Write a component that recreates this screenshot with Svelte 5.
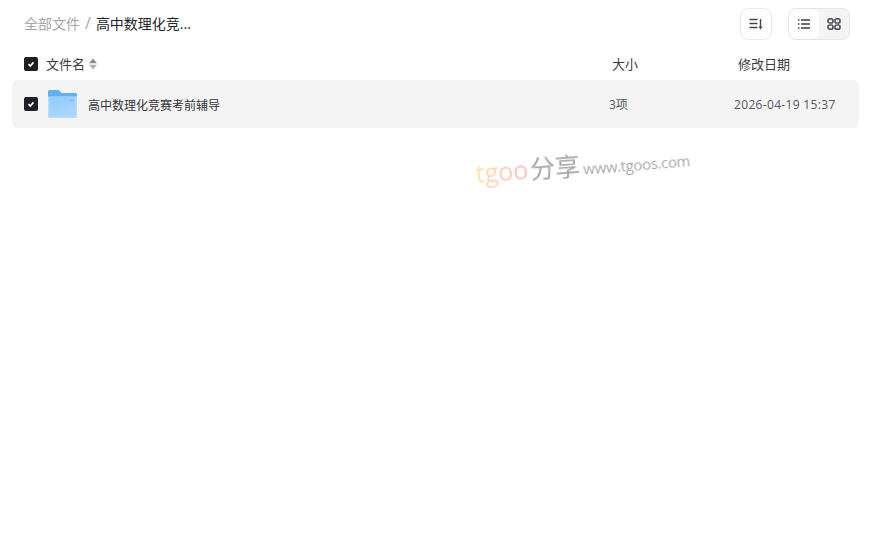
<script>
	const row = { name: '高中数理化竞赛考前辅导', size: '3项', date: '2026-04-19 15:37' }
</script>

<div class="page">
	<header class="top">
		<nav class="crumbs">
			<span class="root">全部文件</span>
			<span class="sep">/</span>
			<span class="current">高中数理化竞...</span>
		</nav>
		<div class="tools">
			<button class="sort-btn" aria-label="排序">
				<svg width="16" height="16" viewBox="0 0 16 16" fill="none" stroke="#45454f" stroke-width="1.4">
					<path d="M1.500 3.500h8M1.500 7.500h8M1.500 11.500h8" />
					<path d="M12.500 3v9" />
					<path d="M10.500 10.500h4l-2 3z" fill="#45454f" stroke="none" />
				</svg>
			</button>
			<div class="switch">
				<button class="on" aria-label="列表">
					<svg width="14" height="14" viewBox="0 0 14 14" fill="none" stroke="#3d3d48" stroke-width="1.3">
						<path d="M1 3h1.400M1 7h1.400M1 11h1.400M4 3h9M4 7h9M4 11h9" />
					</svg>
				</button>
				<button aria-label="网格">
					<svg width="14" height="14" viewBox="0 0 14 14" fill="none" stroke="#55555f" stroke-width="1.700">
						<rect x="1" y="1.800" width="5" height="4.200" rx="1.800" />
						<rect x="8" y="1.800" width="5" height="4.200" rx="1.800" />
						<rect x="1" y="8" width="5" height="4.200" rx="1.800" />
						<rect x="8" y="8" width="5" height="4.200" rx="1.800" />
					</svg>
				</button>
			</div>
		</div>
	</header>

	<div class="head cols">
		<span class="check">
			<svg width="14" height="14" viewBox="0 0 14 14"><path d="M4.500 7.200l1.800 1.800 3.200-3.600" fill="none" stroke="#fff" stroke-width="1.700" /></svg>
		</span>
		<span class="name">
			文件名
			<svg class="updown" width="8" height="12" viewBox="0 0 8 12">
				<path d="M4 .5l4 4.800H0z" fill="#8a8a8f" />
				<path d="M4 11.500L0 6.700h8z" fill="#b0b0b4" />
			</svg>
		</span>
		<span class="size">大小</span>
		<span class="date">修改日期</span>
	</div>

	<div class="row cols">
		<span class="check">
			<svg width="14" height="14" viewBox="0 0 14 14"><path d="M4.500 7.200l1.800 1.800 3.200-3.600" fill="none" stroke="#fff" stroke-width="1.700" /></svg>
		</span>
		<svg class="folder" width="29" height="28" viewBox="0 0 30 28" preserveAspectRatio="none">
			<defs>
				<linearGradient id="fold" x1="0.1" y1="0" x2="0.4" y2="1">
					<stop offset="0" stop-color="#93cbfa" />
					<stop offset="1" stop-color="#a8d6fc" />
				</linearGradient>
			</defs>
			<path d="M0 1.500A1.500 1.500 0 0 1 1.500 0h9a1.500 1.500 0 0 1 1.200.6L14 3h14.500A1.500 1.500 0 0 1 30 4.500V12H0z" fill="#62b0ef" />
			<path d="M0 6.500h30V26.500A1.500 1.500 0 0 1 28.500 28h-27A1.500 1.500 0 0 1 0 26.500z" fill="#b5dcfb" />
			<rect x="1.500" y="6.500" width="27" height="20" fill="url(#fold)" />
			<rect x="22" y="9.500" width="5" height="2" fill="#82bff5" />
		</svg>
		<span class="file">{row.name}</span>
		<span class="count">{row.size}</span>
		<span class="stamp">{row.date}</span>
	</div>

	<div class="mark">
		<span class="t1">t</span><span class="t2">g</span><span class="t3">o</span><span class="t4">o</span><span class="fx">分享</span><span class="url">www.tgoos.com</span>
	</div>
</div>

<style>
	:global(body) {
		margin: 0;
		background: #fff;
	}
	.page {
		position: relative;
		width: 874px;
		height: 538px;
		overflow: hidden;
		font-family: "Open Sans", "Noto Sans CJK SC", sans-serif;
		color: #3a3a45;
	}
	.top {
		display: flex;
		justify-content: space-between;
		align-items: center;
		height: 32px;
		padding: 8px 24px 0;
	}
	.crumbs {
		display: flex;
		align-items: center;
		padding-bottom: 2px;
		font-size: 14px;
	}
	.root {
		color: #a8a4a4;
	}
	.sep {
		margin: 0 5px 0 5px;
		font-size: 16px;
		color: #a8a8ae;
	}
	.current {
		color: #25252b;
	}
	.tools {
		display: flex;
		gap: 16px;
	}
	button {
		display: flex;
		align-items: center;
		justify-content: center;
		padding: 0;
		border: none;
		background: none;
	}
	.sort-btn {
		width: 32px;
		height: 32px;
		box-sizing: border-box;
		border: 1px solid #e8e8ea;
		border-radius: 8px;
		background: #fff;
	}
	.switch {
		display: flex;
		box-sizing: border-box;
		width: 62px;
		height: 32px;
		border: 1px solid #e4e4e6;
		border-radius: 8px;
		background: #f4f4f5;
		overflow: hidden;
	}
	.switch button {
		flex: 1;
	}
	.switch .on {
		background: #fff;
		border-radius: 7px;
	}
	.cols {
		display: flex;
		align-items: center;
	}
	.head {
		box-sizing: border-box;
		height: 40px;
		padding: 7px 0 0 24px;
		font-size: 13px;
	}
	.check {
		display: flex;
		width: 14px;
		height: 14px;
		flex: none;
		border-radius: 2px;
		background: #1f1f27;
	}
	.name {
		display: flex;
		align-items: center;
		gap: 4px;
		width: 566px;
		margin-left: 8px;
	}
	.size {
		width: 126px;
	}
	.row {
		height: 48px;
		margin: 0 15px 0 12px;
		padding-left: 12px;
		border-radius: 6px;
		background: #f4f4f4;
		font-size: 12px;
	}
	.folder {
		flex: none;
		margin-left: 10px;
	}
	.file {
		width: 521px;
		margin-left: 11px;
		padding-top: 1px;
		color: #33333d;
	}
	.count {
		width: 125px;
		color: #55555f;
	}
	.stamp {
		letter-spacing: 0.33px;
		color: #55555f;
	}
	.mark {
		position: absolute;
		left: 477px;
		top: 154px;
		display: flex;
		align-items: baseline;
		transform: rotate(-4.500deg);
		transform-origin: left bottom;
		font-size: 25px;
		opacity: 0.7;
		filter: blur(0.3px);
		white-space: nowrap;
		color: #808080;
	}
	.t1 {
		color: #fdd68a;
	}
	.t2 {
		color: #fdc39a;
	}
	.t3 {
		color: #fdb6a4;
	}
	.t4 {
		color: #fba99f;
	}
	.fx {
		margin-left: 2px;
	}
	.url {
		margin-left: 3px;
		font-size: 15px;
		letter-spacing: -0.35px;
	}
</style>
